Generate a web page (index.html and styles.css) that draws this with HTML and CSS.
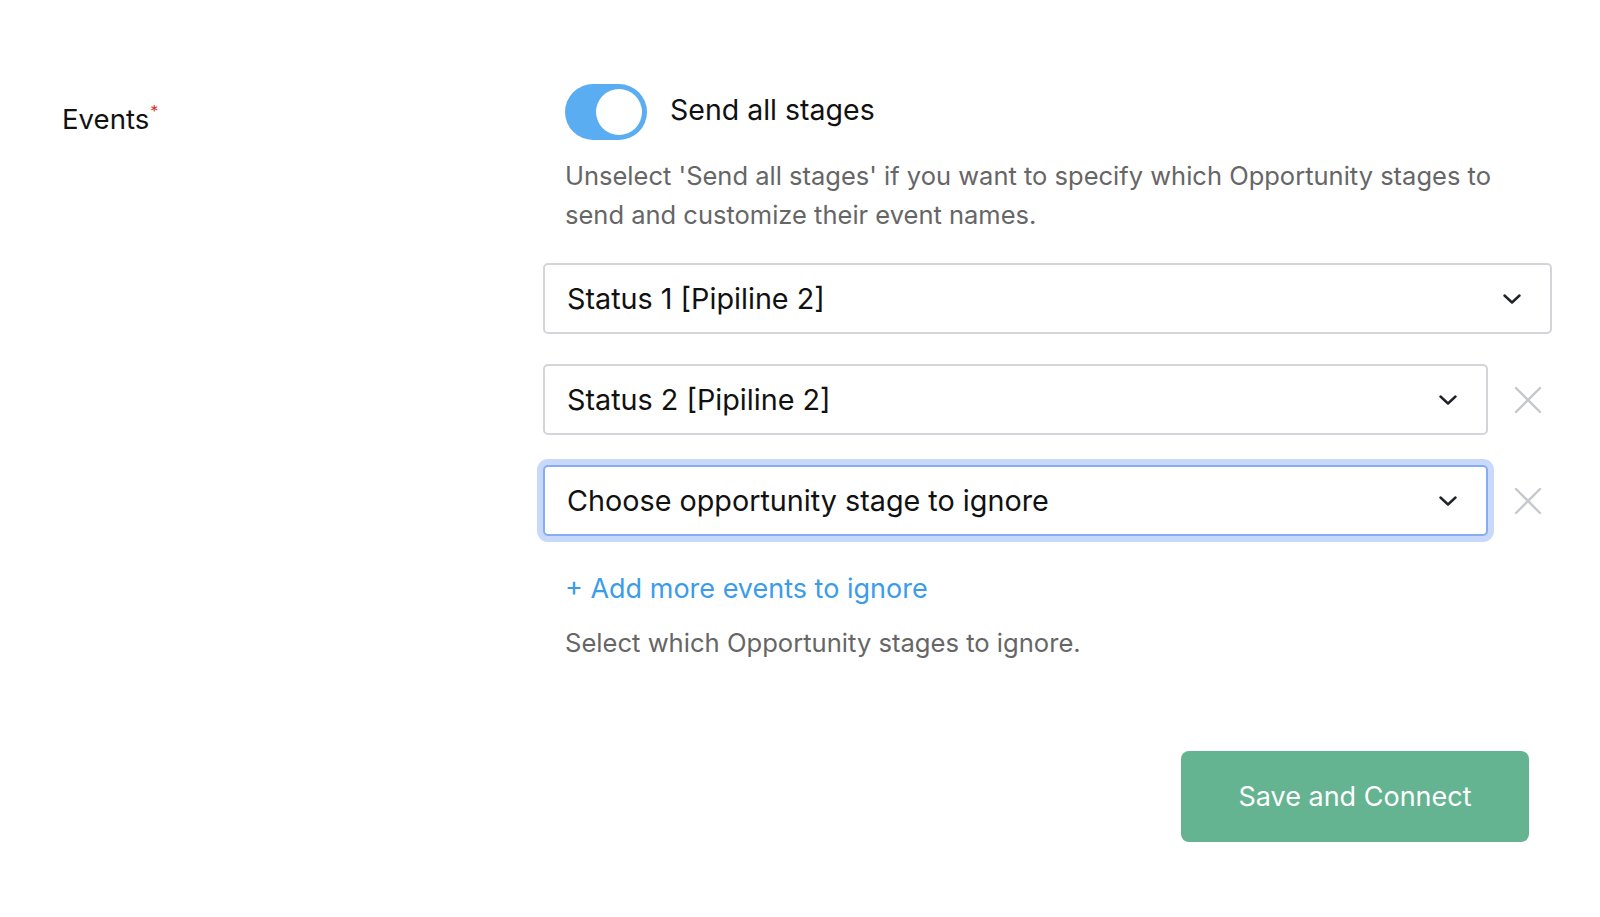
FILE: index.html
```html
<!DOCTYPE html>
<html lang="en">
<head>
<meta charset="utf-8">
<title>Events</title>
<link rel="stylesheet" href="styles.css">
</head>
<body>
<div class="page">
  <div class="label-col">
    <span class="field-label">Events<sup class="req">*</sup></span>
  </div>
  <div class="content-col">
    <div class="toggle-row">
      <span class="toggle"><span class="knob"></span></span>
      <span class="toggle-text">Send all stages</span>
    </div>
    <p class="hint">Unselect 'Send all stages' if you want to specify which Opportunity stages to send and customize their event names.</p>

    <div class="select-row full">
      <div class="select">
        <span class="select-value">Status 1 [Pipiline 2]</span>
        <svg class="chevron" viewBox="0 0 18 10" width="18" height="10"><path d="M1.5 1.5 L9 8.5 L16.5 1.5" fill="none" stroke="#1f2328" stroke-width="2.4" stroke-linecap="round" stroke-linejoin="round"/></svg>
      </div>
    </div>

    <div class="select-row">
      <div class="select">
        <span class="select-value">Status 2 [Pipiline 2]</span>
        <svg class="chevron" viewBox="0 0 18 10" width="18" height="10"><path d="M1.5 1.5 L9 8.5 L16.5 1.5" fill="none" stroke="#1f2328" stroke-width="2.4" stroke-linecap="round" stroke-linejoin="round"/></svg>
      </div>
      <span class="remove"><svg viewBox="0 0 28 28" width="28" height="28"><path d="M2 2 L26 26 M26 2 L2 26" fill="none" stroke="#c5c8cd" stroke-width="2.4" stroke-linecap="round"/></svg></span>
    </div>

    <div class="select-row">
      <div class="select focused">
        <span class="select-value">Choose opportunity stage to ignore</span>
        <svg class="chevron" viewBox="0 0 18 10" width="18" height="10"><path d="M1.5 1.5 L9 8.5 L16.5 1.5" fill="none" stroke="#1f2328" stroke-width="2.4" stroke-linecap="round" stroke-linejoin="round"/></svg>
      </div>
      <span class="remove"><svg viewBox="0 0 28 28" width="28" height="28"><path d="M2 2 L26 26 M26 2 L2 26" fill="none" stroke="#c5c8cd" stroke-width="2.4" stroke-linecap="round"/></svg></span>
    </div>

    <a class="add-link" href="#">+ Add more events to ignore</a>
    <p class="helper">Select which Opportunity stages to ignore.</p>

    <div class="actions">
      <button class="save-btn" type="button">Save and Connect</button>
    </div>
  </div>
</div>
</body>
</html>
```

FILE: styles.css
```css
* { box-sizing: border-box; }

html, body {
  margin: 0;
  padding: 0;
  background: #ffffff;
  font-family: Inter, "Liberation Sans", Arial, sans-serif;
  color: #111111;
}

.page {
  display: grid;
  grid-template-columns: 481px 1009px;
  padding: 84px 0 0 62px;
}

.label-col {
  padding-top: 18px;
}

.field-label {
  font-size: 27.6px;
  line-height: 34px;
  color: #111;
}

.req {
  color: #d0342c;
  font-size: 16px;
  vertical-align: top;
  position: relative;
  top: -8px;
  margin-left: 1px;
}

.content-col {
  display: flex;
  flex-direction: column;
}

.toggle-row {
  display: flex;
  align-items: center;
  gap: 23px;
  margin-left: 22px;
}

.toggle {
  width: 82px;
  height: 56px;
  border-radius: 28px;
  background: #5aadf0;
  display: flex;
  align-items: center;
  justify-content: flex-end;
  padding: 0 5px;
}

.knob {
  width: 46px;
  height: 46px;
  border-radius: 50%;
  background: #ffffff;
}

.toggle-text {
  font-size: 28.5px;
  line-height: 36px;
  padding-bottom: 4px;
  color: #111;
}

.hint {
  margin: 16px 40px 29px 22px;
  font-size: 25.5px;
  line-height: 39px;
  color: #666666;
}

.select-row {
  display: flex;
  align-items: center;
  margin-bottom: 30px;
}

.select {
  flex: 0 0 945px;
  height: 71px;
  border: 2px solid #d3d5d9;
  border-radius: 5px;
  display: flex;
  align-items: center;
  justify-content: space-between;
  padding: 0 29px 0 22px;
  background: #fff;
}

.select-row.full .select { flex-basis: 1009px; }

.select.focused {
  border-color: #86acf4;
  box-shadow: 0 0 0 6px #c9d9fb;
}

.select-value {
  font-size: 28.75px;
  color: #111;
}

.chevron { display: block; }

.remove {
  margin-left: 26px;
  display: flex;
  align-items: center;
}

.remove svg { display: block; }

.add-link {
  margin: 5px 0 0 22px;
  font-size: 27px;
  line-height: 36px;
  color: #3c9ce9;
  text-decoration: none;
}

.helper {
  margin: 18px 0 0 22px;
  font-size: 25.6px;
  line-height: 36px;
  color: #666666;
}

.actions {
  display: flex;
  justify-content: flex-end;
  margin: 90px 23px 0 0;
}

.save-btn {
  width: 348px;
  height: 91px;
  border: none;
  border-radius: 8px;
  background: #64b391;
  color: #ffffff;
  font-family: Inter, "Liberation Sans", Arial, sans-serif;
  font-size: 27px;
}
```
